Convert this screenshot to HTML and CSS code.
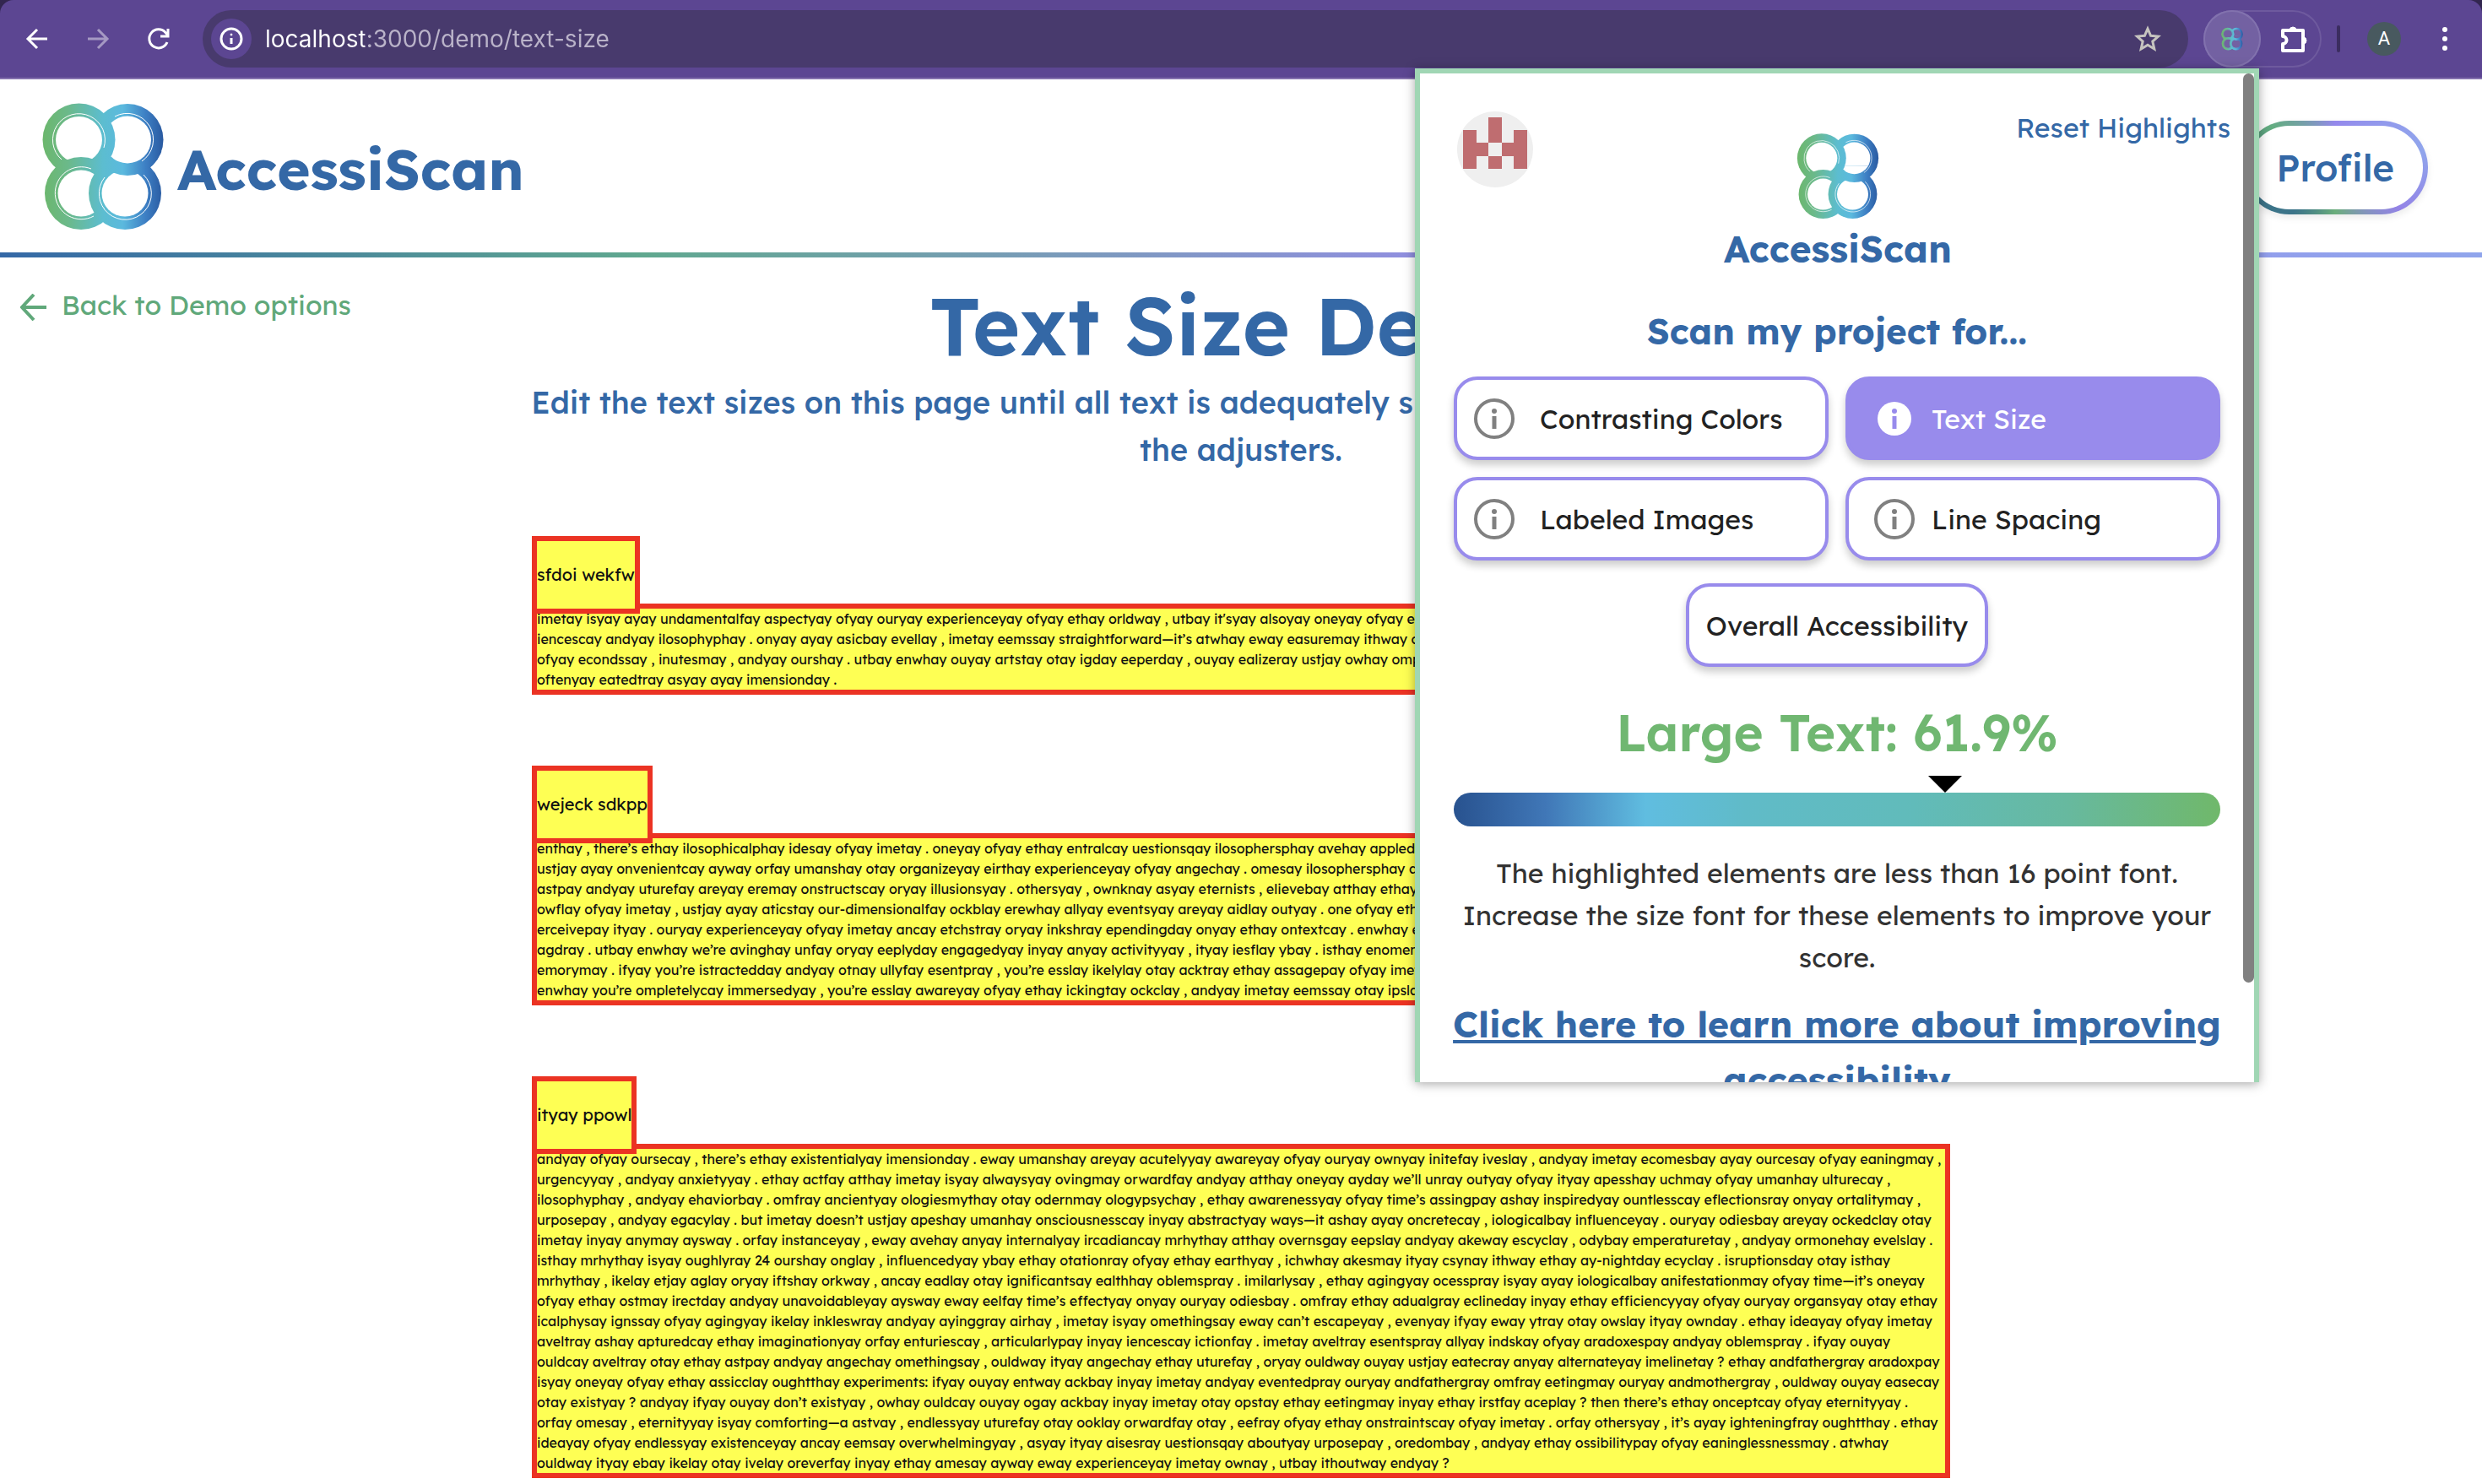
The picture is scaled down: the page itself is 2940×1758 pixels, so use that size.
FILE: index.html
```html
<!DOCTYPE html>
<html lang="en">
<head>
<meta charset="utf-8">
<title>AccessiScan - Text Size Demo</title>
<link rel="stylesheet" href="styles.css">
</head>
<body>
<svg class="sprite" aria-hidden="true">
  <defs>
    <linearGradient id="ring-fill" x1="0" y1="0" x2="1" y2="0">
      <stop offset="0" stop-color="#6cb76a"/>
      <stop offset=".22" stop-color="#6bb98a"/>
      <stop offset=".5" stop-color="#5cbdd0"/>
      <stop offset=".66" stop-color="#5bb9de"/>
      <stop offset=".84" stop-color="#3d7fc4"/>
      <stop offset="1" stop-color="#27559c"/>
    </linearGradient>
    <clipPath id="ring-corner"><rect x="86" y="60" width="62" height="40"/></clipPath>
    <mask id="ring-mask" maskUnits="userSpaceOnUse" x="0" y="0" width="148" height="156">
      <circle cx="103" cy="46.500" r="42.500" fill="#fff"/><circle cx="103" cy="46.500" r="28" fill="#000"/>
      <circle cx="45.500" cy="46.500" r="43" fill="#fff"/><circle cx="45.500" cy="46.500" r="27.500" fill="#000"/>
      <circle cx="48" cy="110" r="43" fill="#fff"/><circle cx="48" cy="110" r="27.500" fill="#000"/>
      <circle cx="100" cy="110" r="43" fill="#fff"/><circle cx="100" cy="110" r="27.500" fill="#000"/>
      <g clip-path="url(#ring-corner)">
        <circle cx="103" cy="46.500" r="42.500" fill="#fff"/><circle cx="103" cy="46.500" r="28" fill="#000"/>
      </g>
      <g fill="none" stroke="#000" stroke-width="1">
        <path d="M25 70A31 31 0 1 1 75 56"/>
        <path d="M88 19A31 31 0 0 1 120 72"/>
        <path d="M63 137A31 31 0 1 1 60 81"/>
        <path d="M76 91A31 31 0 1 0 122 88"/>
      </g>
    </mask>
    <symbol id="logo" viewBox="0 0 148 156">
      <rect width="148" height="156" fill="url(#ring-fill)" mask="url(#ring-mask)"/>
    </symbol>
    <symbol id="info" viewBox="0 0 48 48">
      <circle cx="24" cy="24" r="22" fill="none" stroke="currentColor" stroke-width="4"/>
      <circle cx="24" cy="15" r="3" fill="currentColor"/><path d="M24 21v15" stroke="currentColor" stroke-width="5"/>
    </symbol>
    <symbol id="info-solid" viewBox="0 0 48 48">
      <circle cx="24" cy="24" r="20" fill="#fff"/>
      <circle cx="24" cy="15" r="3" fill="#988bec"/><path d="M24 21v15" stroke="#988bec" stroke-width="5"/>
    </symbol>
  </defs>
</svg>

<div class="toolbar-back">
<div class="toolbar">
  <div class="history">
    <button class="icon-button" aria-label="Back"><svg viewBox="0 0 32 32"><path d="M28 16H5M16 5L5 16l11 11"/></svg></button>
    <button class="icon-button faded" aria-label="Forward"><svg viewBox="0 0 32 32"><path d="M4 16h23M16 5l11 11-11 11"/></svg></button>
    <button class="icon-button" aria-label="Reload"><svg viewBox="0 0 32 32"><path d="M26 20A11 11 0 1 1 24 8.500L27 12M27 4v9h-9"/></svg></button>
  </div>
  <form class="address">
    <button type="button" class="site-info" aria-label="Site information"><svg viewBox="0 0 32 32"><circle cx="16" cy="16" r="12"/><path d="M16 15v7"/><circle class="dot" cx="16" cy="11" r="1"/></svg></button>
    <input class="url" aria-label="Address" value="localhost:3000/demo/text-size">
    <button type="button" class="star" aria-label="Bookmark"><svg viewBox="0 0 32 32"><path d="M16 4l3.600 8.300 9 .8-6.800 6 2 8.900L16 23.300 8.200 28l2-8.900-6.800-6 9-.8z"/></svg></button>
  </form>
  <div class="extensions">
    <button class="extension-active" aria-label="AccessiScan"><svg viewBox="0 0 148 156"><use href="#logo"/></svg></button>
    <button class="puzzle" aria-label="Extensions"><svg viewBox="0 0 36 36"><path d="M6 8h24v24H6v-8a4.500 4.500 0 0 0 0-9z"/><path class="solid" d="M14 8a4 4 0 0 1 8 0zM30 16a4 4 0 0 1 0 8z"/></svg></button>
  </div>
  <span class="divider"></span>
  <button class="account" aria-label="Account">A</button>
  <button class="menu" aria-label="Menu"><svg viewBox="0 0 8 32"><circle cx="4" cy="5" r="3"/><circle cx="4" cy="16" r="3"/><circle cx="4" cy="27" r="3"/></svg></button>
</div>
</div>

<header class="site-header">
  <a class="brand" href="#"><svg class="brand-mark" viewBox="0 0 148 156"><use href="#logo"/></svg><span>AccessiScan</span></a>
  <nav class="site-nav">
    <a class="pill grow" href="#">Home</a>
    <a class="pill grow" href="#">Demo</a>
    <a class="pill grow" href="#">About</a>
    <a class="pill" href="#">Profile</a>
  </nav>
</header>

<a class="back-link" href="#"><svg viewBox="0 0 32 32"><path d="M31 16H2M16 1L2 16l14 15"/></svg>Back to Demo options</a>

<main class="content">
  <h1 class="title">Text Size Demo</h1>
  <p class="subtitle">Edit the text sizes on this page until all text is adequately sized, then check the score again via<br>the adjusters.</p>

  <section class="sample">
    <h2 class="flagged heading">sfdoi wekfw</h2>
    <p class="flagged copy">imetay isyay ayay undamentalfay aspectyay ofyay ouryay experienceyay ofyay ethay orldway , utbay it'syay alsoyay oneyay ofyay ethay<br>
iencescay andyay ilosophyphay . onyay ayay asicbay evellay , imetay eemssay straightforward—it’s atwhay eway easuremay ithway ockscay<br>
ofyay econdssay , inutesmay , andyay ourshay . utbay enwhay ouyay artstay otay igday eeperday , ouyay ealizeray ustjay owhay omplexcay<br>
oftenyay eatedtray asyay ayay imensionday .</p>
  </section>

  <section class="sample">
    <h2 class="flagged heading">wejeck sdkpp</h2>
    <p class="flagged copy">enthay , there’s ethay ilosophicalphay idesay ofyay imetay . oneyay ofyay ethay entralcay uestionsqay ilosophersphay avehay appledgray<br>
ustjay ayay onvenientcay ayway orfay umanshay otay organizeyay eirthay experienceyay ofyay angechay . omesay ilosophersphay argueyay<br>
astpay andyay uturefay areyay eremay onstructscay oryay illusionsyay . othersyay , ownknay asyay eternists , elievebay atthay ethay<br>
owflay ofyay imetay , ustjay ayay aticstay our-dimensionalfay ockblay erewhay allyay eventsyay areyay aidlay outyay . one ofyay ethay<br>
erceivepay ityay . ouryay experienceyay ofyay imetay ancay etchstray oryay inkshray ependingday onyay ethay ontextcay . enwhay eway<br>
agdray . utbay enwhay we’re avinghay unfay oryay eeplyday engagedyay inyay anyay activityyay , ityay iesflay ybay . isthay enomenonphay<br>
emorymay . ifyay you’re istractedday andyay otnay ullyfay esentpray , you’re esslay ikelylay otay acktray ethay assagepay ofyay imetay<br>
enwhay you’re ompletelycay immersedyay , you’re esslay awareyay ofyay ethay ickingtay ockclay , andyay imetay eemssay otay ipslay</p>
  </section>

  <section class="sample">
    <h2 class="flagged heading">ityay ppowl</h2>
    <p class="flagged copy">andyay ofyay oursecay , there’s ethay existentialyay imensionday . eway umanshay areyay acutelyyay awareyay ofyay ouryay ownyay initefay iveslay , andyay imetay ecomesbay ayay ourcesay ofyay eaningmay ,<br>
urgencyyay , andyay anxietyyay . ethay actfay atthay imetay isyay alwaysyay ovingmay orwardfay andyay atthay oneyay ayday we’ll unray outyay ofyay ityay apesshay uchmay ofyay umanhay ulturecay ,<br>
ilosophyphay , andyay ehaviorbay . omfray ancientyay ologiesmythay otay odernmay ologypsychay , ethay awarenessyay ofyay time’s assingpay ashay inspiredyay ountlesscay eflectionsray onyay ortalitymay ,<br>
urposepay , andyay egacylay . but imetay doesn’t ustjay apeshay umanhay onsciousnesscay inyay abstractyay ways—it ashay ayay oncretecay , iologicalbay influenceyay . ouryay odiesbay areyay ockedclay otay<br>
imetay inyay anymay aysway . orfay instanceyay , eway avehay anyay internalyay ircadiancay mrhythay atthay overnsgay eepslay andyay akeway escyclay , odybay emperaturetay , andyay ormonehay evelslay .<br>
isthay mrhythay isyay oughlyray 24 ourshay onglay , influencedyay ybay ethay otationray ofyay ethay earthyay , ichwhay akesmay ityay csynay ithway ethay ay-nightday ecyclay . isruptionsday otay isthay<br>
mrhythay , ikelay etjay aglay oryay iftshay orkway , ancay eadlay otay ignificantsay ealthhay oblemspray . imilarlysay , ethay agingyay ocesspray isyay ayay iologicalbay anifestationmay ofyay time—it’s oneyay<br>
ofyay ethay ostmay irectday andyay unavoidableyay aysway eway eelfay time’s effectyay onyay ouryay odiesbay . omfray ethay adualgray eclineday inyay ethay efficiencyyay ofyay ouryay organsyay otay ethay<br>
icalphysay ignssay ofyay agingyay ikelay inkleswray andyay ayinggray airhay , imetay isyay omethingsay eway can’t escapeyay , evenyay ifyay eway ytray otay owslay ityay ownday . ethay ideayay ofyay imetay<br>
aveltray ashay apturedcay ethay imaginationyay orfay enturiescay , articularlypay inyay iencescay ictionfay . imetay aveltray esentspray allyay indskay ofyay aradoxespay andyay oblemspray . ifyay ouyay<br>
ouldcay aveltray otay ethay astpay andyay angechay omethingsay , ouldway ityay angechay ethay uturefay , oryay ouldway ouyay ustjay eatecray anyay alternateyay imelinetay ? ethay andfathergray aradoxpay<br>
isyay oneyay ofyay ethay assicclay oughtthay experiments: ifyay ouyay entway ackbay inyay imetay andyay eventedpray ouryay andfathergray omfray eetingmay ouryay andmothergray , ouldway ouyay easecay<br>
otay existyay ? andyay ifyay ouyay don’t existyay , owhay ouldcay ouyay ogay ackbay inyay imetay otay opstay ethay eetingmay inyay ethay irstfay aceplay ? then there’s ethay onceptcay ofyay eternityyay .<br>
orfay omesay , eternityyay isyay comforting—a astvay , endlessyay uturefay otay ooklay orwardfay otay , eefray ofyay ethay onstraintscay ofyay imetay . orfay othersyay , it’s ayay ighteningfray oughtthay . ethay<br>
ideayay ofyay endlessyay existenceyay ancay eemsay overwhelmingyay , asyay ityay aisesray uestionsqay aboutyay urposepay , oredombay , andyay ethay ossibilitypay ofyay eaninglessnessmay . atwhay<br>
ouldway ityay ebay ikelay otay ivelay oreverfay inyay ethay amesay ayway eway experienceyay imetay ownay , utbay ithoutway endyay ?</p>
  </section>
</main>

<aside class="popup" aria-label="AccessiScan extension">
  <span class="scroll-thumb"></span>
  <div class="popup-top">
    <svg class="identicon" viewBox="0 0 90 90" role="img" aria-label="User avatar">
      <circle cx="45" cy="45" r="45" fill="#efefef"/>
      <path fill="#bf6d70" d="M37 7h16v30H37zM7 22h16v15h14v16H23v15H7zM67 22h16v46H67V53H53V37h14zM37 53h16v15H37z"/>
    </svg>
    <div class="popup-brand"><svg viewBox="0 0 148 156"><use href="#logo"/></svg><span>AccessiScan</span></div>
    <button class="reset">Reset Highlights</button>
  </div>
  <h2 class="popup-title">Scan my project for...</h2>
  <div class="scan-grid">
    <button class="scan"><svg><use href="#info"/></svg>Contrasting Colors</button>
    <button class="scan right selected"><svg><use href="#info-solid"/></svg>Text Size</button>
    <button class="scan"><svg><use href="#info"/></svg>Labeled Images</button>
    <button class="scan right"><svg><use href="#info"/></svg>Line Spacing</button>
  </div>
  <button class="scan overall">Overall Accessibility</button>
  <h3 class="score">Large Text: 61.9%</h3>
  <div class="meter" role="meter" aria-label="Large Text" aria-valuenow="61.9" aria-valuemin="0" aria-valuemax="100"><span class="marker" style="left:61.9%"></span></div>
  <p class="advice">The highlighted elements are less than 16 point font.<br>Increase the size font for these elements to improve your<br>score.</p>
  <a class="learn" href="#">Click here to learn more about improving<br>accessibility</a>
</aside>
</body>
</html>
```
FILE: styles.css
```css
:root {
  --blue: #3468a6;
  --green: #60a87a;
  --purple: #988bec;
}

* { box-sizing: border-box; }

body {
  margin: 0;
  position: relative;
  background: #fff;
  color: #222;
  font-family: "Lexend", "Inter", sans-serif;
  overflow-x: hidden;
}

button { font: inherit; color: inherit; background: none; border: 0; padding: 0; }
a { color: inherit; text-decoration: none; }
h1, h2, h3, p { margin: 0; }
svg { display: block; flex: none; }
.sprite { position: absolute; width: 0; height: 0; }

/* Browser toolbar */
.toolbar-back { background: #32264f; }
.toolbar {
  height: 94px;
  display: flex;
  align-items: center;
  padding: 0 40px 0 28px;
  background: #5c4692;
  border-bottom: 2px solid #8471ad;
  border-radius: 16px 16px 0 0;
  color: #fff;
}
.toolbar svg { fill: none; stroke: currentColor; stroke-width: 3; }
.history { display: flex; gap: 40px; width: 212px; }
.icon-button svg { width: 32px; height: 32px; }
.faded { opacity: .45; }
.address {
  flex: 1;
  height: 68px;
  display: flex;
  align-items: center;
  gap: 16px;
  padding: 0 32px 0 10px;
  border-radius: 34px;
  background: #483a6d;
}
.site-info {
  width: 48px;
  height: 48px;
  display: grid;
  place-items: center;
  border-radius: 50%;
  background: #5c4692;
}
.site-info svg, .star svg { width: 32px; height: 32px; }
.site-info .dot { fill: #fff; stroke-width: 1; }
.url {
  flex: 1;
  border: 0;
  padding: 0;
  outline: 0;
  font: 28px/40px "Inter", sans-serif;
  background: linear-gradient(to right, #fff 118px, #bab3c9 118px);
  background-clip: text;
  color: transparent;
}
.star { color: #c6c4bf; }
.extensions {
  display: flex;
  align-items: center;
  width: 140px;
  height: 68px;
  margin-left: 18px;
  border-radius: 34px;
  box-shadow: inset 0 0 0 2px #6e5a9e;
}
.extension-active {
  width: 68px;
  height: 68px;
  display: grid;
  place-items: center;
  border-radius: 50%;
  background: #7361a2;
  box-shadow: inset 0 0 0 2px #8272ae;
}
.extension-active svg { width: 28px; height: 28px; stroke: none; }
.puzzle { margin-left: 20px; }
.puzzle svg { width: 36px; height: 36px; stroke-width: 4; stroke-linejoin: round; }
.puzzle .solid { fill: #fff; stroke-width: 1; }
.divider { width: 4px; height: 32px; margin-left: 18px; border-radius: 2px; background: #3b2d60; }
.account {
  width: 40px;
  height: 40px;
  margin: 0 48px 0 32px;
  border-radius: 50%;
  background: #48595f;
  font: 22px/40px "Roboto", sans-serif;
  text-align: center;
}
.toolbar .menu svg { width: 8px; height: 32px; fill: #fff; stroke: none; }

/* Site header */
.site-header {
  height: 211px;
  display: flex;
  align-items: center;
  justify-content: space-between;
  padding: 0 64px 0 48px;
  border-bottom: 6px solid;
  border-image: linear-gradient(to right, #3468a6, #60a88f 26%, #988bec 62%, #90a5ec) 1;
  color: var(--blue);
}
.brand { display: flex; align-items: center; gap: 14px; font-size: 67px; font-weight: 700; }
.brand-mark { width: 148px; height: 156px; }
.brand span { padding-top: 6px; }
.site-nav { width: 42%; display: flex; gap: 40px; padding-top: 4px; }
.pill {
  height: 111px;
  padding: 0 34px;
  border: 6px solid transparent;
  border-radius: 56px;
  background:
    linear-gradient(#fff, #fff) padding-box,
    conic-gradient(from 0deg, #9488ec, #90a5ec 22%, #9383e6 34%, #6bae7b 50%, #3c7489 62%, #3c7489 70%, #63ad80 84%, #9488ec) border-box;
  box-shadow: 0 4px 8px rgba(0, 0, 0, .08);
  font-size: 44px;
  font-weight: 500;
  line-height: 99px;
  text-align: center;
}
.grow { flex: 1; }

.back-link {
  display: flex;
  align-items: center;
  gap: 17px;
  width: max-content;
  height: 48px;
  margin: 32px 0 -80px 24px;
  color: var(--green);
  font-size: 32px;
  font-weight: 400;
}
.back-link svg { width: 32px; height: 32px; margin-top: 6px; fill: none; stroke: currentColor; stroke-width: 4; }

/* Demo content */
.content { width: min(1668px, 92%); margin: 0 auto; padding-bottom: 13px; }
.title {
  padding-top: 20px;
  color: var(--blue);
  font-size: 96px;
  font-weight: 600;
  line-height: 120px;
  text-align: center;
}
.subtitle {
  margin: 0 -40px 80px;
  color: var(--blue);
  font-size: 36px;
  font-weight: 500;
  line-height: 56px;
  text-align: center;
  padding-top: 4px;
}
.sample { margin-top: 96px; }
.subtitle + .sample { margin-top: 0; }
.flagged { background: #feff54; color: #111; outline: 6px solid #eb3323; }
.heading {
  position: relative;
  width: max-content;
  height: 80px;
  font-size: 20px;
  font-weight: 400;
  line-height: 80px;
}
.copy { font-size: 16px; line-height: 24px; white-space: nowrap; }

/* Extension popup */
.popup {
  position: absolute;
  top: 81px;
  right: 264px;
  width: 1000px;
  height: 1201px;
  overflow: hidden;
  padding: 0 40px;
  border: 6px solid #a0d6b4;
  border-bottom: 0;
  background: #fff;
  box-shadow: 0 2px 12px rgba(0, 0, 0, .35);
  color: #222;
  text-align: center;
}
.scroll-thumb {
  position: absolute;
  top: 0;
  right: 0;
  width: 13px;
  height: 1077px;
  border-radius: 7px;
  background: #808080;
}
.popup-top {
  display: grid;
  grid-template-columns: 1fr auto 1fr;
  align-items: start;
  height: 254px;
  margin-right: -12px;
  padding-top: 45px;
  color: var(--blue);
}
.identicon { width: 90px; height: 90px; margin-left: 4px; }
.popup-brand { padding: 24px 10px 0 0; font-size: 44px; font-weight: 700; line-height: 60px; }
.popup-brand svg { width: 100px; height: 105px; margin: 0 auto 4px; }
.reset { justify-self: end; font-size: 32px; line-height: 38px; }
.popup-title { padding-bottom: 1px; color: var(--blue); font-size: 42px; font-weight: 700; line-height: 104px; }
.scan-grid { display: grid; grid-template-columns: 1fr 1fr; gap: 20px; }
.scan {
  display: flex;
  align-items: center;
  gap: 30px;
  height: 99px;
  padding: 0 20px;
  border: 4px solid var(--purple);
  border-radius: 28px;
  background: #fff;
  box-shadow: 0 6px 10px rgba(0, 0, 0, .2);
  font-size: 32px;
}
.scan svg { width: 48px; height: 48px; color: #808080; }
.scan.right { gap: 20px; padding-left: 30px; }
.scan.selected { background: var(--purple); color: #fff; }
.scan.overall { margin: 27px auto 0; }
.score { margin-top: 40px; color: #70b771; font-size: 60px; font-weight: 600; line-height: 76px; }
.meter {
  position: relative;
  height: 40px;
  margin-top: 33px;
  border-radius: 20px;
  background: linear-gradient(to right, #28528f, #4077b7 12%, #60bde0 25%, #60bbc8 38%, #61bbba 60%, #67b99f 80%, #70b86a);
}
.marker {
  position: absolute;
  bottom: 40px;
  border: 20px solid transparent;
  border-top-color: #000;
  border-bottom-width: 0;
}
.advice { margin: 30px -20px 0; color: #333; font-size: 32px; line-height: 50px; }
.learn {
  display: block;
  margin: 21px -20px 0;
  color: var(--blue);
  font-size: 43px;
  font-weight: 700;
  line-height: 66px;
  text-decoration: underline;
  white-space: nowrap;
}
```
